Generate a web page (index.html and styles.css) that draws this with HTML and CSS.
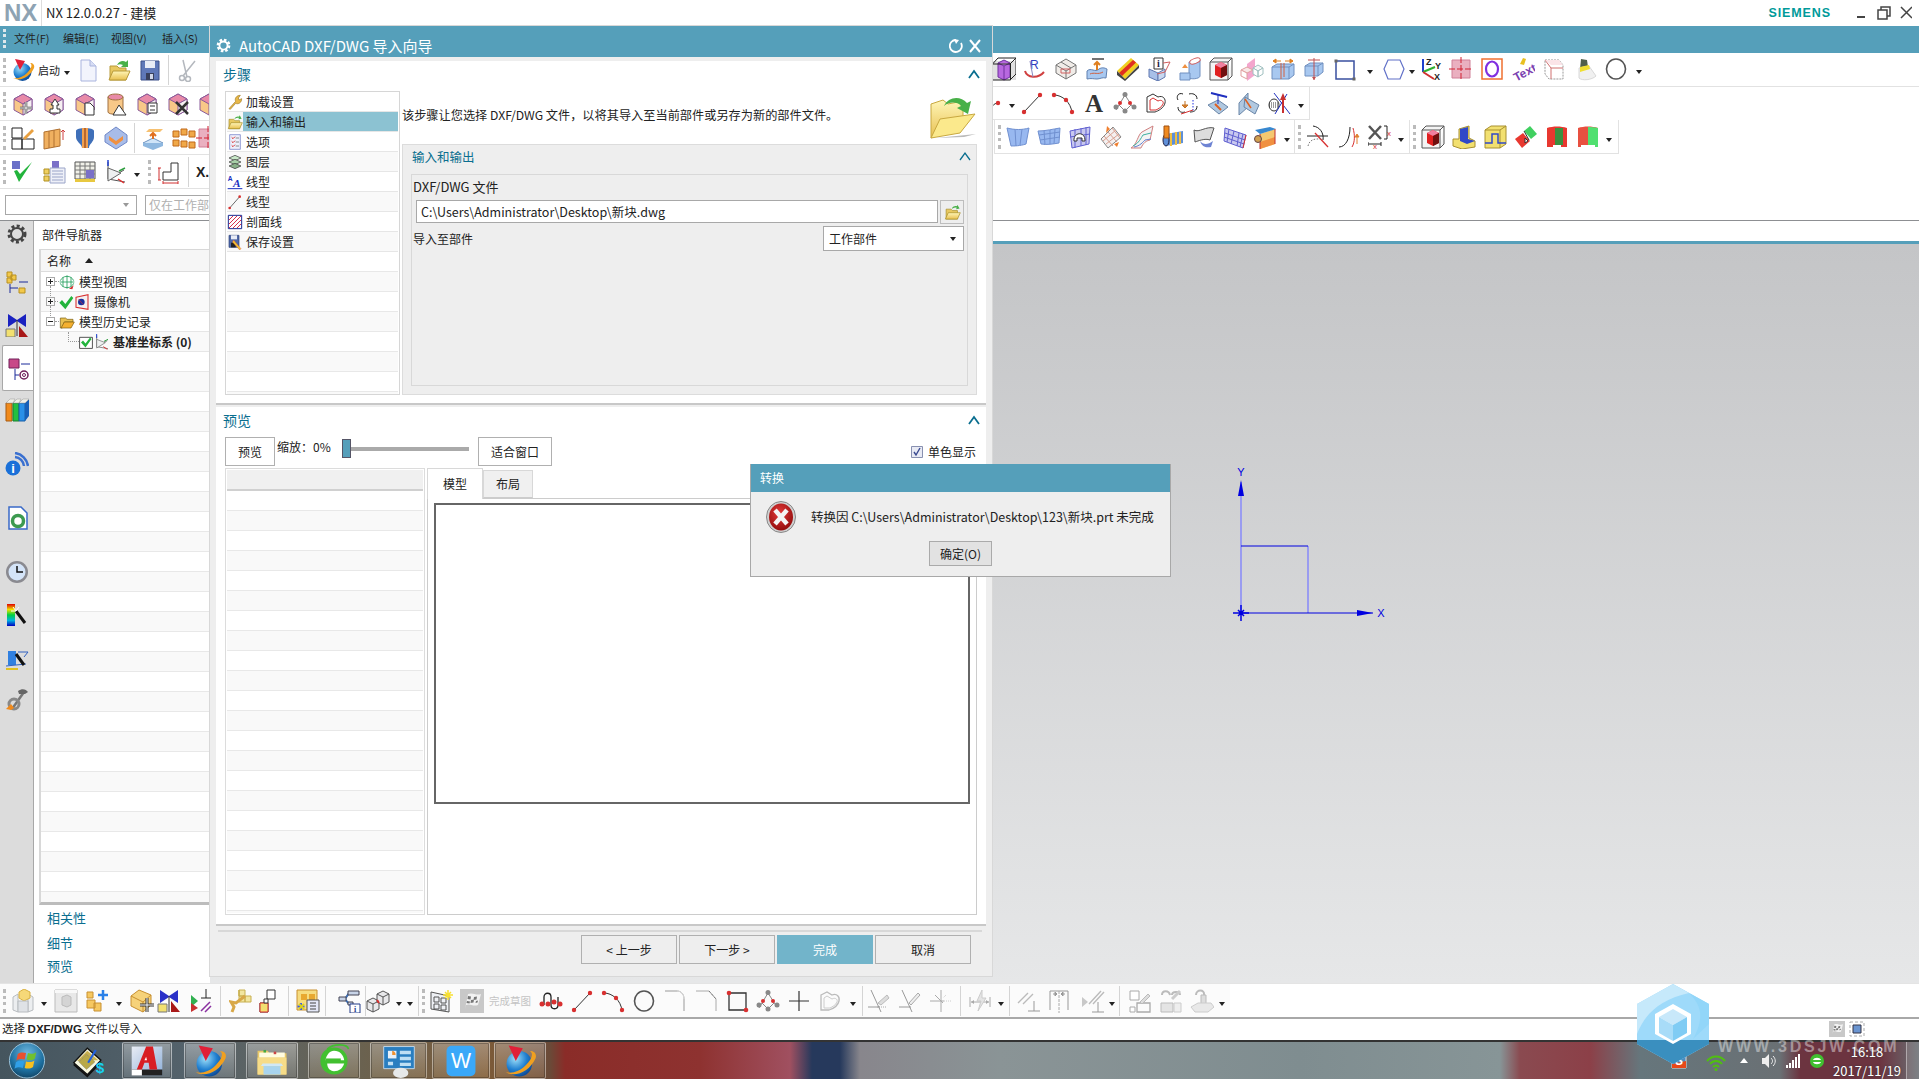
FILE: index.html
```html
<!DOCTYPE html>
<html lang="zh-CN">
<head>
<meta charset="utf-8">
<title>NX 12.0.0.27 - 建模</title>
<link rel="stylesheet" href="styles.css">
</head>
<body>
<svg class="sprite" xmlns="http://www.w3.org/2000/svg">
<defs>
<radialGradient id="gb" cx=".35" cy=".3" r=".8"><stop offset="0" stop-color="#9fe0f8"/><stop offset=".55" stop-color="#1f7fd0"/><stop offset="1" stop-color="#0a3f8a"/></radialGradient>
<radialGradient id="gr" cx=".45" cy=".35" r=".7"><stop offset="0" stop-color="#e43a3a"/><stop offset="1" stop-color="#8e0a0a"/></radialGradient>
<linearGradient id="gf" x1="0" y1="0" x2="0" y2="1"><stop offset="0" stop-color="#fff6b8"/><stop offset="1" stop-color="#e8c050"/></linearGradient>
<linearGradient id="gs" x1="0" y1="0" x2="1" y2="1"><stop offset="0" stop-color="#dbe6f8"/><stop offset="1" stop-color="#7f9fdc"/></linearGradient>
<linearGradient id="gbw" x1="0" y1="0" x2="1" y2="1"><stop offset="0" stop-color="#e8ecf4"/><stop offset="1" stop-color="#8fb0d8"/></linearGradient>
<linearGradient id="grb" x1="0" y1="0" x2="0" y2="1"><stop offset="0" stop-color="#e00000"/><stop offset=".25" stop-color="#f0e000"/><stop offset=".5" stop-color="#00d040"/><stop offset=".75" stop-color="#00b0e0"/><stop offset="1" stop-color="#0000c0"/></linearGradient>
<radialGradient id="go" cx=".5" cy=".3" r=".8"><stop offset="0" stop-color="#6fb8e0"/><stop offset=".6" stop-color="#1d6f9f"/><stop offset="1" stop-color="#0c3550"/></radialGradient>
</defs>
<symbol id="nx" viewBox="0 0 24 24"><circle cx="11.500" cy="14" r="9" fill="url(#gb)"/><path d="M2 20c7 4 17-1 21-10 1-3-1-5-4-5 3 2 1 6-3 10-4 4-9 6-14 5z" fill="#f0a020"/><path d="M4 1l10 2-5 9z" fill="#e02038"/></symbol>
<symbol id="new" viewBox="0 0 24 24"><path d="M5 2h9l6 6v15H5z" fill="#f2f4fc" stroke="#a9b4de"/><path d="M14 2v6h6" fill="#d8def4" stroke="#a9b4de"/></symbol>
<symbol id="open" viewBox="0 0 24 24"><path d="M3 22V8h7l2 2h7v12z" fill="#e8c860" stroke="#b89a3a"/><path d="M2 22l4-9h17l-4 9z" fill="url(#gf)" stroke="#b89a3a"/><path d="M10 7c2-4 6-5 9-3l2-2v7h-7l2-2c-2-1-4-1-6 0z" fill="#48b048"/></symbol>
<symbol id="save" viewBox="0 0 24 24"><path d="M3 3h18v19H3z" fill="#5f78b8" stroke="#3b4f88"/><path d="M7 3h10v7H7z" fill="#e8ecf6"/><path d="M8 15h8v7H8z" fill="#39405c"/><path d="M12 16h3v5h-3z" fill="#cfd6e8"/></symbol>
<symbol id="scis" viewBox="0 0 24 24" ><g fill="none" stroke="#b4b8be" stroke-width="1.500"><circle cx="7" cy="20" r="2.500"/><circle cx="13" cy="21" r="2.500"/><path d="M8 18L20 3M12 19L8 2"/></g></symbol>
<symbol id="cb" viewBox="0 0 24 24"><path d="M3 7l9-5 9 5v11l-9 5-9-5z" fill="#f8c888" stroke="#8a5a9a"/><path d="M3 7l9-5 9 5-9 5z" fill="#e88aa8" stroke="#8a5a9a"/><path d="M12 12l9-5v11l-9 5z" fill="#f6f0f2" stroke="#8a5a9a"/></symbol>
<symbol id="cmove" viewBox="0 0 24 24"><use href="#cb"/><path d="M15 10v12M9 16h12" stroke="#444" stroke-width="2.500"/><path d="M15 10v12M9 16h12" stroke="#fff" stroke-width="1"/></symbol>
<symbol id="cup" viewBox="0 0 24 24"><use href="#cb"/><path d="M13 7l4 6h-2v4h3v4H8v-4h3v-4H9z" fill="#fff" stroke="#333"/></symbol>
<symbol id="cdoc" viewBox="0 0 24 24"><use href="#cb"/><path d="M12 11h5l4 4v8h-9z" fill="#fff" stroke="#333"/></symbol>
<symbol id="ccyl" viewBox="0 0 24 24"><path d="M4 5v15c0 3 15 3 15 0V5z" fill="#f8c888" stroke="#a07040"/><ellipse cx="11.500" cy="5" rx="7.500" ry="3" fill="#e88aa8" stroke="#a07040"/><path d="M15 13l7 10H9z" fill="#fff" stroke="#333"/></symbol>
<symbol id="cdoc2" viewBox="0 0 24 24"><use href="#cb"/><path d="M13 11h9v10h-9zM15 14h5M15 18h5" fill="#fff" stroke="#333"/></symbol>
<symbol id="cx" viewBox="0 0 24 24"><use href="#cb"/><path d="M10 10l12 12M22 10L10 22" stroke="#333" stroke-width="2.500"/></symbol>
<symbol id="sk1" viewBox="0 0 24 24"><g fill="#fff" stroke="#222"><path d="M1 2h10v10H1zM1 13h10v10H1zM11 13h12v10H11z"/></g><path d="M12 12l9-9 2 2-9 9z" fill="#e8a040"/></symbol>
<symbol id="or1" viewBox="0 0 24 24"><path d="M2 6l16-3v17l-16 3z" fill="#f0b060" stroke="#b07030"/><path d="M7 5v17M12 4v17" stroke="#b07030"/><path d="M21 14V4m-2 2l2-2 2 2" stroke="#d04040" fill="none"/></symbol>
<symbol id="bl1" viewBox="0 0 24 24"><path d="M3 5c0-4 18-4 18 0v6c0 5-5 7-5 11h-7c0-4-6-6-6-11z" fill="#3f6fb8"/><path d="M9 2h6v20H9z" fill="#f0a050"/><path d="M12 2v20" stroke="#803010"/></symbol>
<symbol id="hx" viewBox="0 0 24 24"><path d="M12 1l11 8v7l-11 7L1 16V9z" fill="#a8bce8" stroke="#7088c8"/><path d="M5 10l7 5 7-5v4l-7 5-7-5z" fill="#f09040"/></symbol>
<symbol id="plt" viewBox="0 0 24 24"><path d="M2 17l10-5 10 5-10 5z" fill="#cfe4f8" stroke="#6f94c0"/><path d="M2 17v3l10 4 10-4v-3" fill="#8fb8e0"/><path d="M5 6h14l3-3H8z" fill="#f6c070"/><path d="M12 7v6m-3-3l3-3 3 3" fill="none" stroke="#e07020" stroke-width="2"/></symbol>
<symbol id="arr" viewBox="0 0 24 24"><g fill="#f0a848" stroke="#c06818" ><path d="M1 5h6v6H1zM9 3h6v6H9zM17 5h6v6h-6zM1 14h6v6H1zM9 15h6v6H9zM17 16h6v6h-6z"/></g></symbol>
<symbol id="chk" viewBox="0 0 24 24"><path d="M1 1h8v8H1z" fill="#6a70c8"/><path d="M3 11l5 11L21 2l-12 12-3-4z" fill="#22b43c"/></symbol>
<symbol id="tbl1" viewBox="0 0 24 24"><path d="M10 1h7v7h-7z" fill="#7a70c8"/><g fill="#eef0f8" stroke="#9aa4c8"><path d="M8 8h15v15H8z"/></g><path d="M10 11h11M10 14h11M10 17h11M10 20h11" stroke="#9aa4c8"/><path d="M2 9h5v5H2zM2 16h5v5H2z" fill="#f0d060" stroke="#b09020"/></symbol>
<symbol id="tbl2" viewBox="0 0 24 24"><path d="M2 2h20v17H2z" fill="#f0f0e8" stroke="#555"/><path d="M2 6h20M2 10h20M2 14h20M7 2v17M12 2v17M17 2v17" stroke="#777"/><path d="M2 19h20v3H2z" fill="#e8c840"/><path d="M13 10h8v8h-8z" fill="#7a70c8"/></symbol>
<symbol id="cs" viewBox="0 0 24 24"><path d="M4 2v17M4 19l17 3M4 19L20 10" fill="none" stroke="#555"/><path d="M4 8l13 5-13 8z" fill="#eef0f0" stroke="#666"/><path d="M4 0v6" stroke="#2040d0" stroke-width="1.500"/><path d="M15 11l6-3" stroke="#30a040" stroke-width="1.500"/><path d="M14 19l6 4" stroke="#e03030" stroke-width="1.500"/></symbol>
<symbol id="dim" viewBox="0 0 24 24"><path d="M5 20V12h8V3h7v17z" fill="#fff" stroke="#333"/><path d="M1 8v12M0 8h3M0 20h3M5 23h15M5 21v3M20 21v3" stroke="#d03030"/></symbol>
<symbol id="gear" viewBox="0 0 24 24"><circle cx="12" cy="12" r="8" fill="none" stroke="#444" stroke-width="3" stroke-dasharray="3 2.300"/><circle cx="12" cy="12" r="6" fill="none" stroke="#444" stroke-width="2"/></symbol>
<symbol id="gearw" viewBox="0 0 24 24"><circle cx="12" cy="12" r="9" fill="none" stroke="#fff" stroke-width="4" stroke-dasharray="4 3"/><circle cx="12" cy="12" r="6.500" fill="none" stroke="#fff" stroke-width="3"/></symbol>
<symbol id="asm" viewBox="0 0 24 24"><path d="M2 2h5v5H2zM6 5h5v5H6zM2 8h5v5H2z" fill="#f2c84a" stroke="#b89020"/><path d="M14 18h6v5h-6z" fill="#f2c84a" stroke="#b89020"/><path d="M5 14v9M5 18h8M14 12h9" stroke="#1a2a9a"/></symbol>
<symbol id="cons" viewBox="0 0 24 24"><path d="M3 1l9 6 9-6v13l-9-6-9 6z" fill="#1a22c0"/><path d="M1 16h9v8H1z" fill="#f2e070" stroke="#777"/><path d="M14 13l9 11h-9z" fill="#a81818"/><path d="M12 7v16" stroke="#333"/></symbol>
<symbol id="rol" viewBox="0 0 24 24"><path d="M3 2h10v9H3z" fill="#c84888" stroke="#70205a"/><path d="M15 7h9M9 12v11M9 18h4" stroke="#1a2a9a"/><circle cx="18" cy="18" r="4" fill="none" stroke="#70205a" stroke-width="1.500"/><circle cx="18" cy="18" r="1.500" fill="none" stroke="#70205a"/></symbol>
<symbol id="books" viewBox="0 0 24 24"><path d="M1 5h6v18H1z" fill="#f08a1c" stroke="#a85a10"/><path d="M8 5h6v18H8z" fill="#22c040" stroke="#168030"/><path d="M14 5h6v18h-6z" fill="#2a90e8" stroke="#1860a8"/><path d="M20 5l4-4v17l-4 5z" fill="#1860b8"/><path d="M1 5l4-4h5L8 5zM8 5l4-4h4l-2 4zM14 5l4-4h6l-4 4z" fill="#f0f0e8" stroke="#999" stroke-width=".5"/></symbol>
<symbol id="dg" viewBox="0 0 24 24"><path d="M4 1h12l6 6v16H4z" fill="#fff" stroke="#3a6ac8" stroke-width="1.500"/><circle cx="13" cy="15" r="5.500" fill="none" stroke="#3c9a50" stroke-width="3.500"/></symbol>
<symbol id="clk" viewBox="0 0 24 24"><circle cx="12" cy="12" r="11" fill="#8a8a90"/><circle cx="12" cy="12" r="8.500" fill="#d4e4f8"/><path d="M12 6v6h6" fill="none" stroke="#111" stroke-width="1.500"/></symbol>
<symbol id="rb" viewBox="0 0 24 24"><path d="M2 1h8v22H2z" fill="url(#grb)"/><path d="M11 8l9 12" stroke="#111" stroke-width="3"/><path d="M11 8l-3-4m3 4l3-4m-3 4H6" stroke="#fff"/></symbol>
<symbol id="wand" viewBox="0 0 24 24"><path d="M3 5h8v14H3z" fill="#3080e0"/><path d="M1 20l20-2M13 6h10l-4 5" fill="none" stroke="#3060c0"/><path d="M1 23h12" stroke="#e0c020" stroke-width="2"/><path d="M11 8l8 11" stroke="#111" stroke-width="3"/></symbol>
<symbol id="tool" viewBox="0 0 24 24"><path d="M7 22L19 5" stroke="#777" stroke-width="2.500"/><path d="M13 4c4-3 8-2 10 1l-3 2-6 0z" fill="#666"/><circle cx="9" cy="17" r="5" fill="none" stroke="#888" stroke-width="3"/><path d="M1 22l5-5 3 4-3 2z" fill="#f08a1c"/></symbol>
<symbol id="pc" viewBox="0 0 24 24"><path d="M0 4h24v19H0z" fill="#e0e0e0"/><path d="M6 6l6-3 6 3v14l-6 3-6-3z" fill="#b868e0" stroke="#7030a0"/><path d="M6 6l6 3 6-3" fill="#d49af0" stroke="#7030a0"/><path d="M12 9v14" stroke="#7030a0"/><path d="M.5 7h18v16H.5zM.5 7L6 1h18l-6 6M24 1v16l-6 6" fill="none" stroke="#222"/></symbol>
<symbol id="wr" viewBox="0 0 24 24"><g fill="#f0ece8" stroke="#777"><path d="M12 2l10 6v8l-10 6-10-6V8z"/></g><path d="M2 8l10 6 10-6M7 5l10 6M12 14v8" fill="none" stroke="#777"/><path d="M7 12h9v4H7z" fill="none" stroke="#d06060"/></symbol>
<symbol id="lift" viewBox="0 0 24 24"><path d="M2 14c4-4 8 2 12-2 3-2 6-1 8 0l-1 9c-4-1-6 1-9 1s-6-1-10 0z" fill="#a8c8f0" stroke="#6080b0"/><path d="M5 17c4-2 8 1 13-2" stroke="#d06040" fill="none"/><path d="M7 2h12" stroke="#444" stroke-width="1.500"/><path d="M12 13V5m-3 3l3-3 3 3" fill="none" stroke="#e08020" stroke-width="2"/></symbol>
<symbol id="strp" viewBox="0 0 24 24"><path d="M1 14L15 1l8 7L9 22z" fill="#f0d020"/><path d="M3 16L17 3l3 2.500L6 19z" fill="#e03020"/><path d="M1 14v4l8 6 14-13V8L9 22z" fill="#444"/></symbol>
<symbol id="cyl" viewBox="0 0 24 24"><path d="M11 5v15c0 3 11 2 11-1V3z" fill="#a8c8f0" stroke="#7090c0"/><ellipse cx="17" cy="4" rx="5.500" ry="2.500" fill="#fff" stroke="#d06060" transform="rotate(-20 17 4)"/><path d="M2 16h10v7H2z" fill="#a8c8f0" stroke="#7090c0"/><path d="M7 15V8m-3 3l3-4 3 4" fill="#f09040"/></symbol>
<symbol id="rbx" viewBox="0 0 24 24"><path d="M1 5h18v18H1zM1 5l4-4h18l-4 4M23 1v18l-4 4" fill="#f4f4f4" stroke="#555"/><path d="M6 8l6-3 6 3v10l-6 3-6-3z" fill="#e02020"/><path d="M6 8l6 3 6-3-6-3z" fill="#f080a0"/><path d="M12 11l6-3v10l-6 3z" fill="#701010"/></symbol>
<symbol id="pln" viewBox="0 0 24 24"><path d="M7 7l8-6v17l-8 6z" fill="#f090c0" opacity=".8"/><path d="M1 13l6-3 6 3-6 3z" fill="#f8e8e8" stroke="#e0a0a0"/><path d="M1 13v6l6 3v-6z" fill="#fff" stroke="#e0a0a0"/><path d="M13 11l5-3 5 3-5 3z" fill="#f4f8f8" stroke="#a0c0c0"/><path d="M13 11v6l5 3v-6zM18 14l5-3v6l-5 3z" fill="#fff" stroke="#a0c0c0"/></symbol>
<symbol id="spl" viewBox="0 0 24 24"><path d="M1 10l5-3h17v11l-5 4H1z" fill="#a8c8f0" stroke="#7090c0"/><path d="M1 10h17v12M18 10l5-3" fill="none" stroke="#7090c0"/><path d="M10 6v16M13 6v14" stroke="#d06040"/><path d="M2 4h8M14 4h8M2 4l3-2v4zM22 4l-3-2v4z" fill="#e08020" stroke="#e08020"/></symbol>
<symbol id="crs" viewBox="0 0 24 24"><path d="M3 9l5-3h13v9l-5 4H3z" fill="#a8c8f0" stroke="#7090c0"/><path d="M3 9h13v10M16 9l5-3" fill="none" stroke="#7090c0"/><path d="M12 1v22M6 3h12" stroke="#c05050"/><path d="M10 20l2 3 2-3z" fill="#c05050"/></symbol>
<symbol id="rct" viewBox="0 0 24 24"><path d="M3 4h18v18H3z" fill="#fff" stroke="#3a50a0" stroke-width="1.500"/><rect x="1.500" y="2.500" width="3" height="3" fill="#666"/><rect x="19.500" y="20.500" width="3" height="3" fill="#666"/></symbol>
<symbol id="hxo" viewBox="0 0 24 24"><path d="M6 3h12l4 9-4 10H6L2 12z" fill="#fff" stroke="#6070c8" stroke-width="1.200"/></symbol>
<symbol id="ctr" viewBox="0 0 24 24"><path d="M3 3h18v18H3z" fill="#eab0c0" stroke="#d08098"/><path d="M12 0v24M0 12h24" stroke="#d02030" stroke-dasharray="6 2"/></symbol>
<symbol id="oo" viewBox="0 0 24 24"><path d="M2 2h20v20H2z" fill="#fff" stroke="#f07030" stroke-width="1.500"/><ellipse cx="12" cy="12" rx="6" ry="7.500" fill="none" stroke="#8030e0" stroke-width="2.200"/></symbol>
<symbol id="pri" viewBox="0 0 24 24"><path d="M3 3h14l4 5v14H7L3 17z" fill="#fff" stroke="#999" stroke-dasharray="2 1"/><path d="M3 3l6 8h12M9 11v11" fill="none" stroke="#d07070"/><path d="M3 3h14l4 5H9z" fill="#fbe4e8"/></symbol>
<symbol id="lmp" viewBox="0 0 24 24"><path d="M8 2l6 1 1 7-8 2z" fill="#50604a"/><path d="M6 11l10-2 7 10c-4 4-14 5-17 2z" fill="#f0f0f0" stroke="#d8d8d8"/><path d="M7 10l9-2 1 4-10 3z" fill="#f0e030"/></symbol>
<symbol id="cir" viewBox="0 0 24 24"><ellipse cx="12" cy="12" rx="9.500" ry="10" fill="none" stroke="#555" stroke-width="1.600"/></symbol>
<symbol id="ln" viewBox="0 0 24 24"><path d="M4 21L20 4" stroke="#333"/><circle cx="4" cy="21" r="2.200" fill="#d83030"/><circle cx="20" cy="4" r="2.200" fill="#d83030"/></symbol>
<symbol id="ac" viewBox="0 0 24 24"><path d="M3 4c8 0 17 7 18 18" fill="none" stroke="#333"/><circle cx="3" cy="4" r="2.200" fill="#d83030"/><circle cx="15" cy="9" r="2.200" fill="#d83030"/><circle cx="21" cy="21" r="2.200" fill="#d83030"/></symbol>
<symbol id="stu" viewBox="0 0 24 24"><path d="M3 19L12 4l9 14M6 14l6 6 6-6" fill="none" stroke="#888"/><circle cx="12" cy="3.500" r="2.500" fill="#888"/><circle cx="3" cy="16" r="2.500" fill="#888"/><circle cx="21" cy="16" r="2.500" fill="#888"/><circle cx="12" cy="20" r="2.500" fill="#888"/><circle cx="7" cy="12" r="2" fill="#d83030"/><circle cx="17" cy="12" r="2" fill="#d83030"/></symbol>
<symbol id="hrt" viewBox="0 0 24 24"><path d="M3 6l6-3 5 3c5-2 8 2 7 6-1 5-7 8-10 9H3z" fill="#fff" stroke="#333"/><path d="M6 9l3-2 5 3c4-2 6 1 5 3-1 3-5 5-7 6H6z" fill="none" stroke="#d83030"/></symbol>
<symbol id="ofs" viewBox="0 0 24 24"><path d="M8 3C3 1 1 6 3 9M3 16c0 5 4 6 7 5M14 3c3-1 8 0 8 5M15 21c3 0 7-1 7-6" fill="none" stroke="#222"/><path d="M10 10v6m-3-2l3 3 3-3z" fill="#f09040" stroke="#c07020"/><path d="M18 9v12" stroke="#2030e0" stroke-dasharray="1.500 1.500"/><path d="M6 23l12-4" stroke="#d83030"/></symbol>
<symbol id="prj" viewBox="0 0 24 24"><path d="M5 2l16 4M2 14l10-5 10 7-9 7z" fill="#b0c8e0" stroke="#6a86a8"/><path d="M12 3v10" stroke="#2030c0"/><path d="M9 13l6 6" stroke="#e06020" stroke-width="2"/><path d="M5 2l16 4" stroke="#2030c0" stroke-width="2"/></symbol>
<symbol id="int" viewBox="0 0 24 24"><path d="M2 12l9-10v14l-9 8z" fill="#b0c8e0" stroke="#6a86a8"/><path d="M8 6l14 8-4 9-11-7z" fill="#b0c8e0" stroke="#6a86a8"/><path d="M8 8l6 9" stroke="#e06020" stroke-width="1.500"/></symbol>
<symbol id="mir" viewBox="0 0 24 24"><ellipse cx="6" cy="14" rx="5" ry="6" fill="#fff" stroke="#333"/><path d="M1 14h10M1 12h10M1 16h10" stroke="#333" stroke-dasharray="1 1"/><path d="M6 2l16 21M19 3L7 23" stroke="#2030c0"/><path d="M15 2l-3 7h2v13h2V9h2z" fill="#c83030"/></symbol>
<symbol id="s1" viewBox="0 0 24 24"><path d="M1 3c8 2 15 2 22 0l-3 16c-6 2-12 2-15 2z" fill="#98b8f0" stroke="#7090d0"/><path d="M9 4l1 17M16 4l-2 16" stroke="#7090d0"/></symbol>
<symbol id="s2" viewBox="0 0 24 24"><path d="M1 6c8 0 15-2 22-3l-1 15c-6 1-12 2-18 1z" fill="#98b8f0" stroke="#7090d0"/><path d="M7 5l1 15M13 5v14M18 4l-1 15M2 10l21-3M3 15l20-3" stroke="#7090d0"/></symbol>
<symbol id="s3" viewBox="0 0 24 24"><path d="M2 6l20-4-1 17-17 4z" fill="#c8c8f0" stroke="#6060d0"/><path d="M7 4v19M13 3v18M18 2v18M2 12l20-3" stroke="#6060d0"/><path d="M6 16c-1-9 11-10 11-1v1h-3v-3H9v3z" fill="#fff" stroke="#333"/></symbol>
<symbol id="s4" viewBox="0 0 24 24"><path d="M2 14L14 2l8 10-13 11z" fill="#f4f0f0" stroke="#888"/><path d="M5 11l9 10M9 7l9 10M13 3l8 10M4 16L17 5M7 19L20 9" stroke="#d8a090"/><path d="M8 1l3 3-4 4zM18 22l-3-3 5-2z" fill="#f08030"/></symbol>
<symbol id="s5" viewBox="0 0 24 24"><path d="M1 23C7 20 8 9 12 7l11-6-3 14c-6 1-8 6-9 8z" fill="#f4f4f4" stroke="#d08080"/><path d="M3 21c6-3 8-8 10-11l8-2" fill="none" stroke="#40b0a0"/><path d="M4 22c6-1 9-5 11-7l6-1" fill="none" stroke="#6080d0"/></symbol>
<symbol id="s6" viewBox="0 0 24 24"><path d="M5 9l17-3v12L5 21z" fill="#5f8fd8"/><path d="M10 8v13M15 7v13M19 7v12" stroke="#f0c040" stroke-width="2"/><ellipse cx="5" cy="15" rx="3" ry="6" fill="#5f8fd8" stroke="#224"/><path d="M3 1h5v12H3z" fill="#f08a20" stroke="#a05010"/></symbol>
<symbol id="s7" viewBox="0 0 24 24"><path d="M2 5c5 3 12-4 20-2l-4 12c-5-2-12 1-15 2z" fill="#ddd" stroke="#555"/><path d="M8 16c3 4 8 4 13 0l-2 6c-5 1-9 0-11-6z" fill="#3050c0" opacity=".7"/></symbol>
<symbol id="s8" viewBox="0 0 24 24"><path d="M2 3l21 7-3 13L1 16z" fill="#c8c8f0" stroke="#6060d0"/><path d="M6 4l-2 13M11 6l-3 13M16 8l-2 13M20 9l-3 13M2 8l20 7M1 12l20 7" stroke="#6060d0"/><path d="M23 10l-3 13" stroke="#d83030"/></symbol>
<symbol id="s9" viewBox="0 0 24 24"><path d="M6 9l15-5v15l-15 5z" fill="#f4c870"/><path d="M6 17l15-5v7l-15 5z" fill="#f09040"/><path d="M1 5l15-3 6 2-16 5z" fill="#3888d0"/><path d="M6 9v15M21 4v15" stroke="#c03030"/><circle cx="4" cy="14" r="3.500" fill="#d0a050" stroke="#644"/></symbol>
<symbol id="trm" viewBox="0 0 24 24"><path d="M1 11h21" stroke="#222"/><path d="M7 1c7 1 11 7 10 14" fill="none" stroke="#222"/><path d="M9 8l13 14" stroke="#d83030" stroke-width="1.300"/><path d="M2 21c2-8 9-7 13-7" fill="none" stroke="#777" stroke-dasharray="1.500 1.500"/></symbol>
<symbol id="crv" viewBox="0 0 24 24"><path d="M2 22c7 0 11-9 11-20" fill="none" stroke="#222"/><path d="M15 22c3-5 3-12 1-19" fill="none" stroke="#d83030"/><path d="M20 19v-9m-2 2l2-3 2 3z" fill="#e08030" stroke="#e08030"/></symbol>
<symbol id="yl1" viewBox="0 0 24 24"><path d="M1 14h6V4l10-3v12l6 3v6l-13 2-9-3z" fill="#f2e070" stroke="#a89030"/><path d="M8 4l8-2v12l7 2-8 3-7-3z" fill="#3048c8"/></symbol>
<symbol id="yl2" viewBox="0 0 24 24"><path d="M2 5l6-4h15v18l-6 4H2z" fill="#f2e070" stroke="#a89030"/><path d="M2 5h15v18M17 5l6-4" fill="none" stroke="#a89030"/><path d="M2 18h7V9h6v9h8" fill="none" stroke="#3048c8" stroke-width="1.500"/></symbol>
<symbol id="rg" viewBox="0 0 24 24"><path d="M1 14l8-6 7 8-8 7z" fill="#e83830"/><path d="M10 6l6-5 7 8-6 5z" fill="#40d060"/><path d="M10 6l5 9" stroke="#333"/><path d="M11 13l3 3-3 2z" fill="#fff" stroke="#333"/></symbol>
<symbol id="bk1" viewBox="0 0 24 24"><path d="M2 3c6-2 14-2 20 0v19h-6v-2H8v2H2z" fill="#e83830"/><path d="M10 3h8v17h-8z" fill="#3a9040"/></symbol>
<symbol id="bk2" viewBox="0 0 24 24"><path d="M2 3c6-2 14-2 20 0v19h-3v-2H5v2H2z" fill="#e85040"/><path d="M12 2c3 0 7 0 10 1v19h-3v-2h-7z" fill="#50e070"/></symbol>
<symbol id="dot" viewBox="0 0 12 24"><path d="M0 16c1-2 2-3 5-4" stroke="#333" fill="none"/><circle cx="6" cy="12" r="2.200" fill="#d83030"/></symbol>
<symbol id="b1" viewBox="0 0 24 24"><g fill="#eceef0" stroke="#b8bcc0"><path d="M2 8l5-3v18l-5-2zM17 5l5 3v13l-5 2z"/></g><path d="M8 3l5-3 6 3v6l-6 3-5-3z" fill="#f6d878" stroke="#d8b040"/><path d="M7 12h10v11H7z" fill="#dfe2e6" stroke="#b8bcc0"/></symbol>
<symbol id="b2" viewBox="0 0 24 24"><path d="M1 1h22v22H1z" fill="#e8e8e8" stroke="#bbb"/><path d="M1 1h22v3H1z" fill="#f8f8f8"/><path d="M8 8l5-2 4 2v8l-4 2-5-2z" fill="#d4d4d4" stroke="#bbb"/></symbol>
<symbol id="b3" viewBox="0 0 24 24"><g fill="#f6c860" stroke="#c89030"><path d="M2 3h6v6H2zM2 11h8v8H2zM9 14h7v8H9z"/></g><path d="M18 1v10M13 6h10" stroke="#2a80e8" stroke-width="2.500"/></symbol>
<symbol id="b4" viewBox="0 0 24 24"><path d="M1 7l8-6 12 5v10l-8 7-12-6z" fill="#f6d27a" stroke="#c89030"/><path d="M1 7l12 6 8-7" fill="none" stroke="#c89030"/><path d="M13 13v10" stroke="#c89030"/><path d="M17 9v14M10 16h14" stroke="#333" stroke-width="3"/><path d="M17 9v14M10 16h14" stroke="#fff"/></symbol>
<symbol id="b5" viewBox="0 0 24 24"><path d="M3 1l9 6 9-6v13l-9-6-9 6z" fill="#2a30c8"/><path d="M1 15h9v8H1z" fill="#f2e070" stroke="#777"/><path d="M14 12l9 11h-9z" fill="#a81818"/><path d="M12 7v16" stroke="#333"/></symbol>
<symbol id="b6" viewBox="0 0 24 24"><path d="M3 6l7 6-7 6z" fill="#30b050"/><path d="M3 14l7 5-7 4z" fill="#c83030"/><path d="M18 0v9M13 9h10" stroke="#222"/><path d="M13 22l9-9M17 23l6-6" stroke="#8a30a0" stroke-width="1.500"/></symbol>
<symbol id="b7" viewBox="0 0 24 24"><path d="M10 1h6v6h6v6h-6v-6h-6zM10 1v6h6v6h-6z" fill="#f2e6a0" stroke="#c8b050"/><path d="M3 23l2-5-3-5 5 1 9-7" fill="none" stroke="#d8a848" stroke-width="3"/></symbol>
<symbol id="b8" viewBox="0 0 24 24"><path d="M10 1h8v9h-8zM3 14h8v9H3z" fill="#fff" stroke="#333"/><path d="M3 14h8v9H3z" fill="#f2e070" stroke="#d83030"/><path d="M10 10h-3v4h4v-4h-1" fill="#fff" stroke="#333"/></symbol>
<symbol id="b9" viewBox="0 0 24 24"><path d="M1 1h20v20H1z" fill="#f6dc80" stroke="#c89030"/><path d="M5 5h6v6H5zM13 5h6v6h-6z" fill="#e8a830"/><path d="M11 11h12v12H11z" fill="#e4e8f8" stroke="#555"/><path d="M14 14h6M14 17h6M14 20h6" stroke="#444"/><path d="M5 14v7M1.500 17.500h7" stroke="#4060e0" stroke-width="2"/><path d="M3 15l5 5M8 15l-5 5" stroke="#d8d020" stroke-width="2"/></symbol>
<symbol id="b11" viewBox="0 0 24 24"><g fill="#e8e8ea" stroke="#555"><path d="M1 12l6-3 6 3v8l-6 3-6-3z"/><path d="M11 5l6-3 6 3v8l-6 3-6-3z"/></g><path d="M1 12l6 3 6-3M7 15v8M11 5l6 3 6-3M17 8v8" fill="none" stroke="#555"/><path d="M11 11l2 3" stroke="#d83030" stroke-width="2"/></symbol>
<symbol id="sk2" viewBox="0 0 24 24"><path d="M2 3l18 4v16L2 20z" fill="#eef0f4" stroke="#555"/><path d="M5 8h5v5H5zM12 9h5v5h-5zM5 15h5v5H5zM12 16h5v5h-5z" fill="none" stroke="#555"/><path d="M19 1v10M14 6h10M16 3l6 6M22 3l-6 6" stroke="#f8e030" stroke-width="1.500"/></symbol>
<symbol id="flg" viewBox="0 0 24 24"><path d="M0 0h24v24H0z" fill="#c8c8c8"/><path d="M5 20L8 5c5-2 8 2 13 0l-3 11c-5 2-8-2-12 0z" fill="#f2f2f2"/><path d="M8 7l3 .5-.5 3-3-.5zM14 8l3-.5-.5 3-3 .5zM11 11l3-.5-.5 3-3 .5zM7 12l3 .5-.5 2-3-.5zM16 12l2-.5-.5 2-2 .5z" fill="#777"/></symbol>
<symbol id="wv" viewBox="0 0 24 24"><path d="M4 14V6c0-5 7-5 7 0v8c0 5 7 5 7 0V6" fill="none" stroke="#222" stroke-width="1.300" transform="translate(1 2)"/><circle cx="3" cy="15" r="2.500" fill="#d83030"/><circle cx="9" cy="15" r="2.500" fill="#d83030"/><circle cx="15" cy="13" r="2.500" fill="#d83030"/><circle cx="21" cy="15" r="2.500" fill="#d83030"/></symbol>
<symbol id="fl1" viewBox="0 0 24 24"><path d="M2 2h12c4 0 7 3 7 8v12" fill="none" stroke="#999"/><path d="M14 2c4 0 7 3 7 8" fill="none" stroke="#ddd"/></symbol>
<symbol id="fl2" viewBox="0 0 24 24"><path d="M2 2h13l7 8v12" fill="none" stroke="#aaa"/><path d="M15 2l7 8" stroke="#666" stroke-dasharray="1 1"/></symbol>
<symbol id="rc2" viewBox="0 0 24 24"><path d="M4 4h17v17H4z" fill="none" stroke="#333" stroke-width="1.300"/><circle cx="4" cy="4" r="2.300" fill="#d83030"/><circle cx="21" cy="21" r="2.300" fill="#d83030"/></symbol>
<symbol id="pls" viewBox="0 0 24 24"><path d="M12 2v20M2 12h20" stroke="#333" stroke-width="1.200"/></symbol>
<symbol id="hg" viewBox="0 0 24 24"><path d="M3 6l6-3 5 3c5-2 8 2 7 6-1 5-7 8-10 9H3z" fill="none" stroke="#bbb" stroke-width="1.300"/><path d="M6 9l3-2 5 3c4-2 6 1 5 3-1 3-5 5-7 6H6z" fill="none" stroke="#ccc"/></symbol>
<symbol id="t1" viewBox="0 0 24 24"><path d="M4 1l10 22M1 18h12" stroke="#999"/><path d="M11 14l9-8 2 3-8 7z" fill="#ddd" stroke="#bbb"/><path d="M10 18h10" stroke="#aaa" stroke-dasharray="1 1"/></symbol>
<symbol id="t2" viewBox="0 0 24 24"><path d="M4 1l10 22M1 18h12" stroke="#999"/><path d="M11 14l9-10 2 2-9 10z" fill="#eee" stroke="#aaa"/></symbol>
<symbol id="t3" viewBox="0 0 24 24"><path d="M12 1v22M1 12h14M6 6l8 8" stroke="#aaa"/><path d="M15 12h8M17 6l-3 3" stroke="#ccc" stroke-dasharray="1 1"/></symbol>
<symbol id="t4" viewBox="0 0 24 24"><path d="M2 8v10M22 8v10M3 13h18" stroke="#aaa"/><path d="M3 13l3-2v4zM21 13l-3-2v4z" fill="#aaa"/><path d="M14 1l-5 11h4l-3 10 8-13h-4z" fill="#e4e4e4" stroke="#ccc"/></symbol>
<symbol id="t5" viewBox="0 0 24 24"><path d="M2 14L12 4M7 15L17 5" stroke="#bbb" stroke-width="1.400"/><path d="M18 12v10M12 22h12" stroke="#999"/></symbol>
<symbol id="t6" viewBox="0 0 24 24"><path d="M3 2h18v19M3 2v19" fill="none" stroke="#999"/><path d="M12 2v22" stroke="#aaa" stroke-dasharray="3 1"/><path d="M6 5h4M14 5h4M10 5L8 3v4zM14 5l2-2v4z" fill="#999" stroke="#999"/></symbol>
<symbol id="t7" viewBox="0 0 24 24"><path d="M1 8l6 5-6 5z" fill="#c8c8c8"/><path d="M8 15L20 2M12 15L23 3" stroke="#bbb" stroke-width="1.400"/><path d="M17 13v10M11 23h12" stroke="#999"/></symbol>
<symbol id="t8" viewBox="0 0 24 24"><path d="M2 2h9v9H2zM2 18h5v5H2z" fill="#fff" stroke="#aaa"/><path d="M9 14h13v9H9z" fill="none" stroke="#aaa" stroke-width="1.300"/><path d="M12 13l8-8 2 2-8 8z" fill="#ddd" stroke="#bbb"/></symbol>
<symbol id="t9" viewBox="0 0 24 24"><path d="M3 6c0-5 7-5 8 0M13 6c0-4 8-4 8 0" fill="none" stroke="#bbb" stroke-width="2"/><path d="M2 14h12v9H2z" fill="#e4e4e4" stroke="#bbb"/><path d="M15 14h7v9h-7z" fill="#eee" stroke="#ccc"/><path d="M13 10l8-8" stroke="#ccc" stroke-width="3"/></symbol>
<symbol id="t10" viewBox="0 0 24 24"><path d="M6 6c0-6 9-6 8 0" fill="none" stroke="#bbb" stroke-width="2"/><path d="M11 6h5v10h-5z" fill="#ddd" stroke="#bbb"/><path d="M1 18l7-4h13l3 4-6 5H5z" fill="#e8e8e8" stroke="#ccc"/></symbol>
<symbol id="key" viewBox="0 0 24 24"><path d="M3 22l10-11c-2-4 1-9 7-9l-3 4 1 3 4-2c0 6-5 9-9 7L5 23z" fill="#e8b848" stroke="#a07820"/></symbol>
<symbol id="fld" viewBox="0 0 24 24"><path d="M3 22V8h7l2 2h7v12z" fill="#e8c860" stroke="#a8902a"/><path d="M2 22l4-9h17l-4 9z" fill="url(#gf)" stroke="#a8902a"/><path d="M11 7c2-3 5-4 7-3l1-2 3 5-5 1 1-2c-2-.5-4 0-6 1z" fill="#48b048"/></symbol>
<symbol id="opt" viewBox="0 0 24 24"><path d="M4 1h16v22H4z" fill="#eef0fc" stroke="#6070c0"/><path d="M7 5l2 2 3-3M7 11l2 2 3-3M7 17l2 2 3-3" fill="none" stroke="#d83030" stroke-width="1.500"/><path d="M13 6h5M13 12h5M13 18h5" stroke="#555"/></symbol>
<symbol id="lay" viewBox="0 0 24 24"><g fill="#c8e8c8" stroke="#333"><path d="M12 2l9 4-9 4-9-4z"/><path d="M12 8l9 4-9 4-9-4z" fill="#a8d0a8"/><path d="M12 14l9 4-9 4-9-4z" fill="#88b088"/></g></symbol>
<symbol id="sln" viewBox="0 0 24 24"><path d="M4 21L19 4" stroke="#222"/><circle cx="4" cy="21" r="2" fill="#d83030"/><circle cx="19" cy="4" r="2" fill="#d83030"/></symbol>
<symbol id="hat" viewBox="0 0 24 24"><path d="M2 2h20v20H2z" fill="#fff" stroke="#1a2a90" stroke-width="1.500"/><path d="M3 9l6-6M3 15L15 3M3 21L21 3M9 21L21 9M15 21l6-6" stroke="#d83050" stroke-width="1.500"/></symbol>
<symbol id="sv2" viewBox="0 0 24 24"><path d="M3 2h15v18H3z" fill="#4f68a8" stroke="#2c3f78"/><path d="M6 2h9v6H6z" fill="#e8ecf6"/><path d="M6 13h7v7H6z" fill="#222"/><path d="M10 9l11 13-2 2L8 12z" fill="#f0c030" stroke="#d83030" stroke-width=".5"/></symbol>
<symbol id="fgl" viewBox="0 0 24 24"><path d="M2 10a11 11 0 0 1 20 0M2 14a11 11 0 0 0 20 0M12 2v20M6 5v14M18 5v14M1 12h22" fill="none" stroke="#28a060" stroke-width="1.300"/><path d="M15 22l7-5-2 6z" fill="#d83030"/></symbol>
<symbol id="cam" viewBox="0 0 24 24"><path d="M3 5l18-4v22l-18-3z" fill="#f4f0f0" stroke="#d83030" stroke-width="1.600"/><circle cx="11" cy="12" r="5" fill="#1a30a0"/><path d="M7 8l7 8" stroke="#d83030"/></symbol>
<symbol id="okc" viewBox="0 0 24 24"><path d="M2 13l4-4 5 6L20 3l3 3L11 23z" fill="#22b43c"/></symbol>
<symbol id="fldo" viewBox="0 0 24 24"><path d="M2 21V6h8l2 2h9v4H8L5 21z" fill="#e8c050" stroke="#775a10"/><path d="M3 21l5-9h15l-5 9z" fill="#f4b030" stroke="#775a10"/></symbol>
<symbol id="erx" viewBox="0 0 24 24"><path d="M1 4h22v19H1z" fill="#fff" stroke="#222" stroke-width="1.300" /></symbol>
<symbol id="cad" viewBox="0 0 40 40"><path d="M2 3h36v34H2z" fill="url(#gbw)"/><path d="M2 30h36v7H2z" fill="#222"/><path d="M2 30h12v7H2z" fill="#fff"/><path d="M8 30L19 3h8l5 27h-9l-1-8h-5l-3 8z" fill="#d81e24"/><path d="M19 15l-2 4h3z" fill="#fff"/></symbol>
<symbol id="expl" viewBox="0 0 40 40"><path d="M3 8h12l2 3h20v25H3z" fill="#e8c868"/><path d="M5 10h30v6H5z" fill="#fffce0"/><path d="M3 16h34v20H3z" fill="#f6dc88"/><path d="M10 26h20v10H10z" fill="#a8d4ee"/><path d="M7 26l2-3h22l2 3z" fill="#d0e8f6"/><path d="M10 7h3v3h-3z" fill="#4a4"/><path d="M22 9h3v3h-3z" fill="#c44"/></symbol>
<symbol id="eb" viewBox="0 0 40 40"><path d="M20 4c10 0 16 7 16 16s-7 16-16 16S4 29 4 20 10 4 20 4z" fill="#42c030"/><path d="M20 8c7 0 11 5 12 11H10c1-6 5-11 10-11z" fill="#fff"/><path d="M12 23h20c-2 6-6 9-12 9-5 0-8-4-8-9z" fill="#fff"/><path d="M10 17h18v3H10z" fill="#42c030"/><path d="M12 6C20-1 36 0 37 6" fill="none" stroke="#42c030" stroke-width="2"/></symbol>
<symbol id="pan" viewBox="0 0 40 40"><path d="M2 3h36v26H2z" fill="#2a7ec0" stroke="#d0e0f0"/><path d="M7 8h10v9H7z" fill="#e8f0f8"/><path d="M12 8v5h4a5 5 0 0 0-4-5z" fill="#f09030"/><path d="M21 8h13v4H21zM21 15h13v4H21zM7 21h6v4H7zM21 22h13v4H21z" fill="#bfdff4"/><ellipse cx="22" cy="34" rx="9" ry="6" fill="#e6e8e8"/></symbol>
</svg>

<div class="app">
  <header class="title">
    <span class="nx">NX</span>
    <span class="title-text">NX 12.0.0.27 - 建模</span>
    <span class="siemens">SIEMENS</span>
    <svg class="winbtns" viewBox="0 0 60 14"><path d="M5 11h8" stroke="#444" stroke-width="2"/><path d="M26 4h9v9h-9zM29 4V1h9v9h-3" fill="none" stroke="#444" stroke-width="1.500"/><path d="M49 1l11 11M60 1L49 12" stroke="#444" stroke-width="1.500"/></svg>
  </header>

  <nav class="menu">
    <b class="mgrip"></b>
    <span class="m1">文件(F)</span><span class="m2">编辑(E)</span><span class="m3">视图(V)</span><span class="m4">插入(S)</span>
  </nav>

  <section class="ribbon">
    <div class="rib-left">
      <div class="tb"><b class="grip"></b><svg class="i"><use href="#nx"/></svg><span class="qs">启动</span><b class="car w10"></b><svg class="i"><use href="#new"/></svg><svg class="i"><use href="#open"/></svg><svg class="i"><use href="#save"/></svg><b class="div w6"></b><svg class="i"><use href="#scis"/></svg></div>
      <div class="tb"><b class="grip"></b><svg class="i"><use href="#cmove"/></svg><svg class="i"><use href="#cup"/></svg><svg class="i"><use href="#cdoc"/></svg><svg class="i"><use href="#ccyl"/></svg><svg class="i"><use href="#cdoc2"/></svg><svg class="i"><use href="#cx"/></svg><svg class="i"><use href="#cb"/></svg></div>
      <div class="tb"><b class="grip"></b><svg class="i"><use href="#sk1"/></svg><svg class="i"><use href="#or1"/></svg><svg class="i"><use href="#bl1"/></svg><svg class="i"><use href="#hx"/></svg><b class="div w6"></b><svg class="i"><use href="#plt"/></svg><svg class="i"><use href="#arr"/></svg><svg class="i tighter"><use href="#ctr"/></svg></div>
      <div class="tb"><b class="grip"></b><svg class="i"><use href="#chk"/></svg><svg class="i"><use href="#tbl1"/></svg><svg class="i"><use href="#tbl2"/></svg><svg class="i"><use href="#cs"/></svg><b class="car w12"></b><b class="grip grip2"></b><svg class="i"><use href="#dim"/></svg><b class="div w6"></b><span class="xtxt">X.</span></div>
      <div class="search"><span class="sel"><b class="car w10 gray"></b></span><span class="filt">仅在工作部件</span></div>
    </div>
    <div class="rib-right">
      <div class="tb"><svg class="i first"><use href="#pc"/></svg><svg class="i" viewBox="0 0 24 24"><text x="7" y="12" font-size="12" fill="#3040c0" font-family="Liberation Sans">R</text><path d="M2 14c2 7 13 8 19 1" fill="none" stroke="#d04040" stroke-width="2"/><path d="M7 4l3 16" stroke="#8888c0"/></svg><svg class="i"><use href="#wr"/></svg><svg class="i"><use href="#lift"/></svg><svg class="i"><use href="#strp"/></svg><svg class="i" viewBox="0 0 24 24"><path d="M2 12l9 4v8l-9-4z" fill="#a8c0e8" stroke="#6078b0"/><path d="M11 16l7-4v8l-7 4z" fill="#c8d8f0" stroke="#6078b0"/><path d="M7 1h9v11H7z" fill="#fff" stroke="#333"/><text x="11.500" y="10" font-size="10" font-weight="700" text-anchor="middle" fill="#224" font-family="Liberation Serif">i</text><path d="M16 6l7-1-5 10-8 2" fill="none" stroke="#d06060"/></svg><svg class="i"><use href="#cyl"/></svg><svg class="i"><use href="#rbx"/></svg><svg class="i"><use href="#pln"/></svg><svg class="i"><use href="#spl"/></svg><svg class="i"><use href="#crs"/></svg><svg class="i"><use href="#rct"/></svg><b class="car w18"></b><svg class="i"><use href="#hxo"/></svg><b class="car w5"></b><svg class="i" viewBox="0 0 24 24"><path d="M5 15V2" fill="none" stroke-width="2" stroke="#2040d0"/><path d="M5 15l12-5" stroke="#30b030" stroke-width="2"/><path d="M5 15l11 7" stroke="#d03030" stroke-width="2"/><g font-size="9" font-weight="700" fill="#222" font-family="Liberation Sans"><text x="8" y="8">Z</text><text x="17" y="12">Y</text><text x="16" y="23">X</text></g></svg><svg class="i"><use href="#ctr"/></svg><svg class="i"><use href="#oo"/></svg><svg class="i" viewBox="0 0 24 24"><text x="0" y="20" font-size="12" font-weight="700" font-family="Liberation Sans" fill="#7a40b0" transform="rotate(-28 12 12)">Text</text><path d="M9 7l3-6 3 1-2 6z" fill="#e8c020"/></svg><svg class="i"><use href="#pri"/></svg><svg class="i"><use href="#lmp"/></svg><svg class="i"><use href="#cir"/></svg><b class="car w14"></b></div>
      <div class="tb group g318"><svg class="dotic"><use href="#dot"/></svg><b class="car w16"></b><svg class="i first"><use href="#ln"/></svg><svg class="i"><use href="#ac"/></svg><svg class="i" viewBox="0 0 24 24"><text x="12" y="21" font-size="25" text-anchor="middle" font-family="Liberation Serif" fill="#333" font-weight="700">A</text></svg><svg class="i"><use href="#stu"/></svg><svg class="i"><use href="#hrt"/></svg><svg class="i"><use href="#ofs"/></svg><svg class="i"><use href="#prj"/></svg><svg class="i"><use href="#int"/></svg><svg class="i"><use href="#mir"/></svg><b class="car w11"></b></div>
      <div class="tb tb3">
        <div class="group g301"><b class="grip grip3"></b><svg class="i"><use href="#s1"/></svg><svg class="i"><use href="#s2"/></svg><svg class="i"><use href="#s3"/></svg><svg class="i"><use href="#s4"/></svg><svg class="i"><use href="#s5"/></svg><svg class="i"><use href="#s6"/></svg><svg class="i"><use href="#s7"/></svg><svg class="i"><use href="#s8"/></svg><svg class="i"><use href="#s9"/></svg><b class="car w10"></b></div>
        <div class="group g115"><b class="grip grip3"></b><svg class="i"><use href="#trm"/></svg><svg class="i"><use href="#crv"/></svg><svg class="i" viewBox="0 0 24 24"><path d="M1 1l12 13M13 1L1 14" stroke="#555" stroke-width="2.500"/><path d="M16 1h3v13h-3M0 17v4M0 19h13M13 17v4" fill="none" stroke="#222"/><text x="19" y="11" font-size="8" fill="#d83030" font-family="Liberation Sans">x</text><text x="5" y="24" font-size="8" fill="#d83030" font-family="Liberation Sans">x</text></svg><b class="car w10"></b></div>
        <div class="group g209"><b class="grip grip3"></b><svg class="i"><use href="#rbx"/></svg><svg class="i"><use href="#yl1"/></svg><svg class="i"><use href="#yl2"/></svg><svg class="i"><use href="#rg"/></svg><svg class="i"><use href="#bk1"/></svg><svg class="i"><use href="#bk2"/></svg><b class="car w10"></b></div>
      </div>
    </div>
  </section>

  <main class="main">
    <aside class="side">
      <div class="vtabs">
        <svg class="vi m1t"><use href="#gear"/></svg>
        <svg class="vi m24t"><use href="#asm"/></svg>
        <svg class="vi m19t"><use href="#cons"/></svg>
        <div class="vactive"><svg class="vi0"><use href="#rol"/></svg></div>
        <svg class="vi m7t"><use href="#books"/></svg>
        <svg class="vi m30t" viewBox="0 0 24 24"><circle cx="8" cy="16" r="7.500" fill="#1a70d8"/><text x="8" y="21" font-size="13" font-weight="700" fill="#fff" text-anchor="middle" font-family="Liberation Sans">i</text><path d="M10 5a10 10 0 0 1 9 9M10 1a15 15 0 0 1 13 13" fill="none" stroke="#3a70d0" stroke-width="2.500"/></svg>
        <svg class="vi m30t"><use href="#dg"/></svg>
        <svg class="vi m30t"><use href="#clk"/></svg>
        <svg class="vi m19t"><use href="#rb"/></svg>
        <svg class="vi m19t"><use href="#wand"/></svg>
        <svg class="vi m17t"><use href="#tool"/></svg>
      </div>
      <div class="navpanel">
        <div class="navhead">部件导航器</div>
        <div class="navtable">
          <div class="th">名称<b class="sort"></b></div>
          <div class="tr"><b class="bx pl"></b><b class="dash"></b><svg class="ti"><use href="#fgl"/></svg><span>模型视图</span></div>
          <div class="tr alt"><b class="bx pl"></b><b class="dash d2"></b><svg class="ti"><use href="#okc"/></svg><svg class="ti t2"><use href="#cam"/></svg><span>摄像机</span></div>
          <div class="tr"><b class="bx mi last"></b><b class="dash"></b><svg class="ti"><use href="#fldo"/></svg><span>模型历史记录</span></div>
          <div class="tr alt deep"><b class="stub"></b><svg class="ti ck"><use href="#erx"/></svg><svg class="ti ck2"><use href="#okc"/></svg><svg class="ti"><use href="#cs"/></svg><span class="bold">基准坐标系 (0)</span></div>
          <div class="filler"></div>
        </div>
        <div class="navbot">
          <div>相关性</div><div>细节</div><div>预览</div>
        </div>
      </div>
    </aside>
    <div class="view">
      <div class="viewtop"></div>
      <svg class="canvas" viewBox="210 244 1709 739">
        <g fill="none">
          <path d="M1241 613V482M1308 546V613" stroke="#9a9cf0" stroke-width="2"/>
          <path d="M1241 546h67M1241 613h132" stroke="#0000e0" stroke-width="1"/>
          <path d="M1241 480l-3 16h6zM1373 613l-16-3v6z" fill="#0000e0"/>
          <path d="M1233 613h16M1241 605v16M1238 610l6 6M1244 610l-6 6" stroke="#0000e0" stroke-width="1.500"/>
        </g>
        <text x="1241" y="476" class="axl">Y</text>
        <text x="1381" y="617" class="axl">X</text>
      </svg>
    </div>
  </main>

  <section class="btb">
    <b class="grip"></b><svg class="i"><use href="#b1"/></svg><b class="car w12"></b><svg class="i"><use href="#b2"/></svg><svg class="i"><use href="#b3"/></svg><b class="car w14"></b><svg class="i"><use href="#b4"/></svg><svg class="i tight"><use href="#b5"/></svg><svg class="i"><use href="#b6"/></svg><b class="div w10"></b><svg class="i"><use href="#b7"/></svg><svg class="i tight"><use href="#b8"/></svg><b class="div w8"></b><svg class="i"><use href="#b9"/></svg><b class="div w4"></b><b class="sp w6"></b><svg class="i" viewBox="0 0 24 24"><path d="M2 10h6l4-6h10M8 10l4 5h3" fill="none" stroke="#3a6ab0" stroke-width="2"/><path d="M2 8h7v4H2zM11 2h11v4H11zM11 13h5v3h-5z" fill="#c8d4e8" stroke="#445"/><path d="M13 15h10v9H13z" fill="#fff" stroke="#223a88"/><text x="18" y="23" font-size="8" font-weight="700" text-anchor="middle" fill="#223a88" font-family="Liberation Serif">i</text></svg><b class="div w2"></b><svg class="i tight"><use href="#b11"/></svg><b class="car w10"></b><b class="car w12"></b><b class="div w6"></b><b class="grip grip4"></b><svg class="i"><use href="#sk2"/></svg><svg class="i"><use href="#flg"/></svg><span class="fin">完成草图</span><b class="sp w3"></b><svg class="i"><use href="#wv"/></svg><svg class="i"><use href="#ln"/></svg><svg class="i"><use href="#ac"/></svg><svg class="i"><use href="#cir"/></svg><svg class="i"><use href="#fl1"/></svg><svg class="i"><use href="#fl2"/></svg><svg class="i"><use href="#rc2"/></svg><svg class="i"><use href="#stu"/></svg><svg class="i"><use href="#pls"/></svg><svg class="i"><use href="#hg"/></svg><b class="car w16"></b><b class="div w2"></b><svg class="i"><use href="#t1"/></svg><svg class="i"><use href="#t2"/></svg><svg class="i"><use href="#t3"/></svg><b class="div w8"></b><svg class="i"><use href="#t4"/></svg><b class="car w12"></b><b class="div w5"></b><svg class="i"><use href="#t5"/></svg><svg class="i"><use href="#t6"/></svg><b class="sp w3"></b><svg class="i"><use href="#t7"/></svg><b class="car w7"></b><b class="div w9"></b><svg class="i"><use href="#t8"/></svg><svg class="i"><use href="#t9"/></svg><svg class="i"><use href="#t10"/></svg><b class="car w10"></b>
  </section>

  <footer class="status">
    <span>选择 <b>DXF/DWG</b> 文件以导入</span>
    <span class="stat-ics"><svg class="si"><use href="#flg"/></svg><svg class="si si2" viewBox="0 0 16 16"><path d="M1 1h14v14H1z" fill="#fff" stroke="#aaa" stroke-dasharray="3 2"/><path d="M4 4h8v8H4z" fill="#6a94d0" stroke="#334"/></svg></span>
  </footer>

  <section class="task">
    <svg class="orb" viewBox="0 0 40 40"><circle cx="20" cy="20" r="19" fill="url(#go)" stroke="#9fc8e0"/><path d="M10 13c3-2 6-2 9-1l-1.500 7c-3-1-6-1-9 1z" fill="#e85030"/><path d="M21 12c3 1 6 1 9-1l-1.500 7c-3 2-6 2-9 1z" fill="#70c030"/><path d="M8 22c3-2 6-2 9-1l-1.500 7c-3-1-6-1-9 1z" fill="#30a0e8"/><path d="M19 21c3 1 6 1 9-1l-1.500 7c-3 2-6 2-9 1z" fill="#f8c020"/></svg>
    <div class="tbtn plain"><svg class="tic" viewBox="0 0 40 40"><path d="M2 22L18 5l16 14-16 17z" fill="#f8f8e0" stroke="#111" stroke-width="1.500"/><path d="M6 20L18 8l13 11" fill="#c8b050"/><path d="M8 21l9-9 10 9-10 9z" fill="#b8a848" stroke="#777" stroke-dasharray="1 1"/><path d="M2 24l16 14 16-17" fill="none" stroke="#111" stroke-width="2"/><path d="M28 7l-9 15" stroke="#2060e0" stroke-width="2.500"/><text x="33" y="34" font-size="18" font-weight="700" fill="#1ad0f0" text-anchor="middle" font-family="Liberation Sans">$</text></svg></div>
    <div class="tbtn a"><svg class="tic"><use href="#cad"/></svg></div>
    <div class="tbtn"><svg class="tic"><use href="#nx"/></svg></div>
    <div class="tbtn"><svg class="tic"><use href="#expl"/></svg></div>
    <div class="tbtn warm"><svg class="tic"><use href="#eb"/></svg></div>
    <div class="tbtn warm w2b"><svg class="tic"><use href="#pan"/></svg></div>
    <div class="tbtn warm w3b"><svg class="tic" viewBox="0 0 40 40"><rect x="3" y="2" width="34" height="36" rx="6" fill="#3aa8f8"/><text x="20" y="28" font-size="25" fill="#fff" text-anchor="middle" font-family="Liberation Sans">W</text></svg></div>
    <div class="tbtn warm"><svg class="tic"><use href="#nx"/></svg></div>
    <div class="tray">
      <svg class="tr-i" viewBox="0 0 16 16"><path d="M1 1h14v14H1z" fill="#4a8cc0" stroke="#ddd"/><path d="M1 11l14-3v7H1z" fill="#e84818"/><text x="8" y="12" font-size="12" font-weight="700" fill="#fff" text-anchor="middle" font-family="Liberation Sans">S</text></svg>
      <svg class="tr-i wf" viewBox="0 0 20 16"><path d="M1 6c5-6 13-6 18 0M4 9c3-4 9-4 12 0M7 12c2-2 4-2 6 0" fill="none" stroke="#50c010" stroke-width="2"/><circle cx="10" cy="14.500" r="1.500" fill="#50c010"/></svg>
      <b class="up"></b>
      <svg class="tr-i spk" viewBox="0 0 16 16"><path d="M1 5h3l4-4v14l-4-4H1z" fill="#eee"/><path d="M10 5c2 2 2 4 0 6M12 3c3 3 3 7 0 10" fill="none" stroke="#eee"/></svg>
      <svg class="tr-i sig" viewBox="0 0 16 14"><path d="M1 11h2v3H1zM4 9h2v5H4zM7 6h2v8H7zM10 3h2v11h-2zM13 0h2v14h-2z" fill="#fff"/></svg>
      <svg class="tr-i sie" viewBox="0 0 16 16"><circle cx="8" cy="8" r="7" fill="#40c030"/><path d="M4 7c1-3 7-3 8 0zM4 9h8c-1 3-7 3-8 0z" fill="#fff"/></svg>
      <div class="clock"><div>16:18</div><div>2017/11/19</div></div>
      <b class="showdesk"></b>
    </div>
  </section>
</div>

<section class="wizard">
  <div class="wz-title">
    <svg class="wz-gear"><use href="#gearw"/></svg><span>AutoCAD DXF/DWG 导入向导</span>
    <svg class="wz-ctl" viewBox="0 0 34 16"><path d="M7 2a6 6 0 1 0 5 3" fill="none" stroke="#fff" stroke-width="1.800"/><path d="M5 1l5 1-3 4z" fill="#fff"/><path d="M21 2l10 12M31 2L21 14" stroke="#fff" stroke-width="2"/></svg>
  </div>
  <div class="wz-body">
    <div class="panel p1">
      <div class="phead"><span>步骤</span><svg class="chev"><path d="M1 9L6 2l5 7" /></svg></div>
      <div class="p1-cols">
        <div class="steps">
          <div class="st"><svg class="sti"><use href="#key"/></svg><span>加载设置</span></div>
          <div class="st alt on"><svg class="sti"><use href="#fld"/></svg><span>输入和输出</span></div>
          <div class="st"><svg class="sti"><use href="#opt"/></svg><span>选项</span></div>
          <div class="st alt"><svg class="sti"><use href="#lay"/></svg><span>图层</span></div>
          <div class="st"><svg class="sti" viewBox="0 0 24 24"><text x="1" y="10" font-size="10" font-weight="700" fill="#1a30c0" font-family="Liberation Sans">A</text><text x="9" y="20" font-size="17" font-style="italic" font-weight="700" fill="#1a30c0" font-family="Liberation Serif">A</text><path d="M1 22h22" stroke="#1a30c0" stroke-width="1.500"/></svg><span>线型</span></div>
          <div class="st alt"><svg class="sti"><use href="#sln"/></svg><span>线型</span></div>
          <div class="st"><svg class="sti"><use href="#hat"/></svg><span>剖面线</span></div>
          <div class="st alt"><svg class="sti"><use href="#sv2"/></svg><span>保存设置</span></div>
          <div class="filler"></div>
        </div>
        <div class="p1-right">
          <div class="desc"><span>该步骤让您选择 DXF/DWG 文件，以将其导入至当前部件或另存为新的部件文件。</span><svg class="bigfld" viewBox="0 0 46 43"><path d="M6 42l30-3 10-1-12 3z" fill="#bbb"/><path d="M1 8l12-4 5 4 15-3v16L1 42z" fill="url(#gf)" stroke="#c8a840"/><path d="M1 42l9-19 35-5-15 19z" fill="#fbe98c" stroke="#c8a840"/><path d="M14 10C18 1 30-1 37 7l4-2-3 13-11-6 4-2c-4-5-13-4-17 0z" fill="#48b048"/></svg></div>
          <div class="grp">
            <div class="grp-h"><span>输入和输出</span><svg class="chev sm"><path d="M1 9L6 2l5 7" /></svg></div>
            <div class="grp-in">
              <div class="lab">DXF/DWG 文件</div>
              <div class="fileline"><div class="inp">C:\Users\Administrator\Desktop\新块.dwg</div><div class="fbtn"><svg class="fbi"><use href="#fld"/></svg></div></div>
              <div class="impline"><span>导入至部件</span><div class="combo"><span>工作部件</span><b class="car w10"></b></div></div>
            </div>
          </div>
        </div>
      </div>
    </div>
    <div class="panel p2">
      <div class="phead"><span>预览</span><svg class="chev"><path d="M1 9L6 2l5 7" /></svg></div>
      <div class="pv-bar">
        <div class="btn b50">预览</div>
        <span class="zoomlab">缩放：0%</span>
        <b class="handle"></b><b class="track"></b>
        <div class="btn b74">适合窗口</div>
        <span class="mono"><svg class="chk" viewBox="0 0 12 12"><path d="M.5.5h11v11H.500z" fill="#e8eaf4" stroke="#8890b0"/><path d="M3 6l2 3 4-7" fill="none" stroke="#3a4a90" stroke-width="1.400"/></svg>单色显示</span>
      </div>
      <div class="pv-cols">
        <div class="pv-list"><div class="pv-h"></div><div class="filler"></div></div>
        <div class="pv-tabs">
          <div class="tabs"><span class="tab act">模型</span><span class="tab">布局</span></div>
          <div class="tabbody"><div class="sheet"></div></div>
        </div>
      </div>
    </div>
    <div class="wz-foot">
      <div class="btn w">&lt; 上一步</div>
      <div class="btn w">下一步 &gt;</div>
      <div class="btn w pri-b">完成</div>
      <div class="btn w">取消</div>
    </div>
  </div>
</section>

<section class="err">
  <div class="err-t">转换</div>
  <div class="err-m">
    <svg class="err-i" viewBox="0 0 30 32"><ellipse cx="15" cy="16" rx="14.500" ry="15.500" fill="#d0d0d0" stroke="#888"/><ellipse cx="15" cy="16" rx="12" ry="13.500" fill="url(#gr)"/><path d="M9 9l12 14M21 9L9 23" stroke="#f4f4f4" stroke-width="4.500"/></svg>
    <span>转换因 C:\Users\Administrator\Desktop\123\新块.prt 未完成</span>
  </div>
  <div class="err-b"><div class="okb">确定(O)</div></div>
</section>

<div class="wm">
  <svg class="wm-h" viewBox="0 0 72 80"><path d="M36 0l36 20v40L36 80 0 60V20z" fill="#9edafa"/><path d="M36 0L0 20v30C8 30 22 16 52 9z" fill="#c6e9fb"/><path d="M36 0l16 9c12 12 16 24 4 46L72 40V20z" fill="#92d6f9"/><path d="M0 56h72v4L36 80 0 60z" fill="#3a8fbf"/><path d="M36 20l18 10v20L36 60 18 50V30z" fill="#fff"/><path d="M36 25l14 8-14 8-14-8z" fill="#c8e8fa"/><path d="M22 33l14 8v16l-14-8z" fill="#a8dcf8"/><path d="M50 33l-14 8v16l14-8z" fill="#80ccf4"/></svg>
  <span class="wm-t">WWW.3DSJW.COM</span>
</div>
</body>
</html>
```

FILE: styles.css
```css
* { box-sizing: border-box; }
html, body { margin: 0; padding: 0; width: 1919px; height: 1079px; overflow: hidden; }
body { position: relative; font: 12px/16px "Noto Sans CJK SC", "Noto Sans", sans-serif; color: #222; background: #fff; }
.sprite { display: block; width: 0; height: 0; }
b { font-weight: 400; }
.app { display: flex; flex-direction: column; width: 1919px; height: 1079px; }

.title { flex: 0 0 26px; display: flex; align-items: center; background: #fff; }
.nx { width: 42px; padding-left: 4px; font: 700 24px/26px "Liberation Sans", sans-serif; color: #8ea3b3; border-right: 1px solid #ddd; }
.title-text { margin-left: 4px; font-size: 13px; }
.siemens { margin-left: auto; margin-right: 21px; font: 700 12.5px/14px "Liberation Sans", sans-serif; letter-spacing: .9px; color: #009a9a; }
.winbtns { width: 60px; height: 14px; margin-right: 7px; }

.menu { flex: 0 0 27px; display: flex; align-items: center; padding-bottom: 3px; background: #559fba; font-size: 11px; position: relative; }
.mgrip { width: 3px; height: 19px; margin-left: 3px; border-left: 3px dotted #dfe8ec; }
.menu span { white-space: nowrap; }
.m1 { margin-left: 8px; width: 49px; }
.m2 { width: 48px; }
.m3 { width: 51px; }

.ribbon { flex: 0 0 168px; display: flex; justify-content: space-between; background: #fff; border-bottom: 1px solid #8d8f92; }
.rib-left { width: 210px; overflow: hidden; display: flex; flex-direction: column; }
.rib-right { width: 927px; display: flex; flex-direction: column; }
.tb { flex: 0 0 34px; display: flex; align-items: center; white-space: nowrap; border-bottom: 1px solid #e2e2e2; }
.rib-right .tb { flex-basis: 33.500px; }
.rib-right .tb.group { border-right: 1px solid #e2e2e2; }
.g318 { width: 318px; }
.tb3 { border-bottom: 0 !important; }
.group { display: flex; align-items: center; height: 100%; border-bottom: 1px solid #e2e2e2; border-right: 1px solid #e2e2e2; }
.tb3 .group { padding-top: 2px; }
.g301 { width: 301px; margin-left: 1.500px; border-left: 1px solid #e2e2e2; }
.g115 { width: 115px; }
.g209 { width: 209px; }
.i { flex: none; width: 24px; height: 24px; margin: 0 3.500px; }
.i.first { margin-left: 0; }
.i.tight { margin-left: 0; }
.i.tighter { margin-left: -3.500px; }
.dotic { flex: none; width: 12px; height: 24px; }
.grip { flex: none; width: 3px; height: 24px; margin: 0 1px 0 3px; border-left: 3px dotted #bbb; }
.grip2 { margin: 0 3px 0 5px; }
.grip3 { margin: 0 2px 0 3px; }
.grip4 { margin: 0 1px 0 0; }
.qs { flex: none; width: 24px; font-size: 11px; }
.xtxt { margin-left: 5px; font: 700 14px "Liberation Sans", sans-serif; }
.car { flex: none; display: flex; align-items: center; justify-content: center; height: 24px; }
.car::before { content: ""; flex: none; border: 3.500px solid transparent; border-top: 4px solid #222; border-bottom: 0; margin-top: 6px; }
.car.gray::before { border-top-color: #999; margin-top: 0; }
.div { flex: none; height: 30px; background: linear-gradient(#d4d4d4, #d4d4d4) center / 1px 100% no-repeat; }
.sp { flex: none; height: 1px; }
.w2 { width: 2px; } .w3 { width: 3px; } .w4 { width: 4px; } .w5 { width: 5px; } .w6 { width: 6px; } .w7 { width: 7px; }
.w8 { width: 8px; } .w9 { width: 9px; } .w10 { width: 10px; } .w11 { width: 11px; } .w12 { width: 12px; }
.w14 { width: 14px; } .w16 { width: 16px; } .w18 { width: 18px; }

.search { flex: 1; display: flex; align-items: center; gap: 8px; padding-left: 5px; white-space: nowrap; }
.sel { flex: none; width: 132px; height: 20px; border: 1px solid #a8a8a8; display: flex; justify-content: flex-end; align-items: center; padding-right: 5px; }
.filt { flex: none; width: 80px; height: 20px; border: 1px solid #a8a8a8; padding-left: 3px; font-size: 12px; line-height: 18px; color: #b0b0b0; overflow: hidden; }

.main { flex: 0 0 762px; display: flex; min-height: 0; }
.side { flex: 0 0 210px; display: flex; }
.vtabs { flex: 0 0 32px; display: flex; flex-direction: column; align-items: center; background: #dcdcdc; border-right: 1px solid #a8a8a8; }
.vi { flex: none; width: 24px; height: 24px; }
.m1t { margin-top: 1px; } .m24t { margin-top: 24px; } .m19t { margin-top: 19px; } .m7t { margin-top: 7px; } .m30t { margin-top: 30px; } .m17t { margin-top: 17px; }
.vactive { flex: none; width: 31px; height: 46px; margin: 8px 0 0 2px; padding: 11px 0 0 3px; background: #fff; border: 1px solid #a8a8a8; border-right: 0; border-radius: 2px 0 0 2px; }
.vi0 { display: block; width: 24px; height: 24px; }
.navpanel { flex: 1; min-width: 0; display: flex; flex-direction: column; background: #fff; }
.navhead { flex: 0 0 28px; padding-left: 8px; line-height: 28px; }
.navtable { flex: 1; min-height: 0; margin-left: 5px; display: flex; flex-direction: column; border: 1px solid #d8d8d8; border-left-width: 2px; border-bottom: 3px solid #bcbcbc; overflow: hidden; }
.th { flex: 0 0 22px; padding-left: 6px; background: #f6f6f6; border-bottom: 1px solid #dcdcdc; line-height: 21px; display: flex; align-items: center; }
.sort { margin-left: 14px; border: 4.500px solid transparent; border-bottom: 5px solid #222; border-top: 0; }
.tr { flex: 0 0 20px; display: flex; align-items: center; padding-left: 5px; border-bottom: 1px solid #e6e6e6; white-space: nowrap; }
.tr.alt { background: #f9f9f9; }
.tr > span { margin-left: 4px; }
.bx { position: relative; flex: none; width: 9px; height: 9px; border: 1px solid #aaa; background: linear-gradient(#222, #222) center / 5px 1px no-repeat; }
.bx.pl { background: linear-gradient(#222, #222) center / 5px 1px no-repeat, linear-gradient(#222, #222) center / 1px 5px no-repeat; }
.bx::after { content: ""; position: absolute; left: 3px; top: 8px; height: 12px; border-left: 1px dotted #999; }
.bx.last::after { display: none; }
.dash { flex: none; width: 4px; border-top: 1px dotted #999; }
.dash.d2 { width: 3px; }
.ti { flex: none; width: 16px; height: 16px; }
.ti.t2 { margin-left: 0; }
.deep { padding-left: 27px; }
.stub { flex: none; width: 11px; height: 10px; margin-top: -10px; border-left: 1px dotted #999; border-bottom: 1px dotted #999; }
.ck { width: 14px; height: 14px; margin-left: 0; }
.ck2 { width: 12px; height: 12px; margin-left: -13px; }
.deep .ti:nth-of-type(3) { margin-left: 2px; }
.deep > span { margin-left: 3px; }
.bold { font-weight: 700; }
.filler { flex: 1; background: repeating-linear-gradient(#fff 0 19px, #e8e8e8 19px 20px, #f9f9f9 20px 39px, #e8e8e8 39px 40px); }
.navbot { flex: 0 0 78px; padding-left: 13px; font-size: 13px; line-height: 25px; color: #0a6e8f; }
.navbot div:last-child { line-height: 21px; }

.view { flex: 1; display: flex; flex-direction: column; min-width: 0; }
.viewtop { flex: 0 0 23px; background: #fff; border-bottom: 3px solid #559fba; }
.canvas { flex: 1; display: block; width: 100%; min-height: 0; background: linear-gradient(#c4c5c7, #e6e7e8); }
.axl { font: 11px "Liberation Sans", sans-serif; fill: #0000e0; text-anchor: middle; }

.btb { flex: 0 0 36px; width: 1919px; display: flex; align-items: center; background: linear-gradient(90deg, #fbfbfb 1230px, #fff 1230px); border-top: 1px solid #e4e4e4; border-bottom: 2px solid #a8a8a8; white-space: nowrap; }
.fin { flex: none; width: 43px; margin-left: 1.500px; font-size: 10.500px; color: #c4c4c4; }
.status { flex: 0 0 21px; display: flex; justify-content: space-between; align-items: center; padding: 0 0 2px 2px; font-size: 11.500px; background: #fff; }
.status b { font-weight: 700; font-family: "Liberation Sans", sans-serif; }
.stat-ics { display: flex; gap: 4px; margin-right: 54px; }
.si { width: 16px; height: 16px; }

.task { flex: 1; display: flex; align-items: stretch; min-height: 0; border-top: 2px solid #333; background:
  linear-gradient(90deg, #45555e 0, #55636c 200px, #6a6250 360px, #7c5a38 490px, #6a4a38 550px, #8a2c28 565px, #8e3230 700px, #a05060 790px, #26395c 812px, #26395c 840px, #88868c 860px, #8a9496 1000px, #7f8d90 1300px, #879597 1500px, #8a4a50 1520px, #8c4048 1590px, #66767c 1640px, #6a7074 1780px, #6c3440 1800px, #6c3440 1880px, #6a7074 1919px); color: #fff; }
.orb { flex: none; width: 40px; height: 37px; margin-left: 7px; margin-top: 0; }
.tbtn { flex: none; display: flex; justify-content: center; align-items: center; width: 52px; margin-right: 10px; background: linear-gradient(rgba(255,255,255,.38), rgba(255,255,255,.12)); border: 1px solid rgba(255,255,255,.35); box-shadow: inset 0 0 0 1px rgba(0,0,0,.25); border-radius: 2px; }
.tbtn.plain { width: 53px; margin: 0 7px 0 15px; background: none; border-color: transparent; box-shadow: none; }
.tbtn.a { width: 50px; margin-right: 12px; }
.tbtn.warm { background: linear-gradient(rgba(255,255,255,.3), rgba(255,220,170,.14)); }
.tbtn.w2b { width: 57px; margin-right: 5px; }
.tbtn.w3b { width: 58px; margin-right: 4px; }
.tic { width: 34px; height: 34px; }
.tray { flex: 1; display: flex; align-items: center; justify-content: flex-end; position: relative; }
.tr-i { flex: none; width: 16px; height: 16px; }
.wf { width: 20px; margin-left: 19px; margin-top: 4px; }
.up { flex: none; margin-left: 14px; border: 4px solid transparent; border-bottom: 5px solid #fff; border-top: 0; }
.spk { margin-left: 13px; }
.sig { margin-left: 8px; }
.sie { margin-left: 8px; }
.clock { flex: none; width: 76px; margin-left: 4px; margin-right: 1px; font-size: 13px; line-height: 19px; text-align: center; text-shadow: 0 0 2px #333; white-space: nowrap; }
.showdesk { flex: none; width: 13px; align-self: stretch; margin-left: 0; background: rgba(255,255,255,.12); border-left: 1px solid rgba(255,255,255,.4); }

/* floating windows */
.wizard { position: absolute; left: 210px; top: 26px; width: 782px; height: 950px; display: flex; flex-direction: column; background: #eee; box-shadow: 0 0 0 1px #d8d8d8; }
.wz-title { flex: 0 0 31px; display: flex; align-items: center; padding: 8px 0 0 6px; background: #559fba; color: #fff; font-size: 15px; white-space: nowrap; }
.wz-gear { flex: none; width: 15px; height: 15px; margin-right: 8px; }
.wz-ctl { flex: none; width: 34px; height: 16px; margin-left: auto; margin-right: 9px; }
.wz-body { flex: 1; min-height: 0; display: flex; flex-direction: column; gap: 4px; padding: 4px 6px 0; }
.panel { background: #fff; display: flex; flex-direction: column; }
.p1 { flex: 0 0 342px; box-shadow: 0 2px 0 #c8c8c8; }
.p2 { flex: 0 0 517px; box-shadow: 0 2px 0 #c8c8c8; padding-bottom: 9px; }
.phead { flex: 0 0 30px; display: flex; align-items: center; justify-content: space-between; padding: 0 7px 4px; font-size: 14px; color: #0a6e8f; }
.chev { flex: none; width: 12px; height: 11px; fill: none; stroke: #0a6e8f; stroke-width: 1.800; margin-right: -1px; }
.chev.sm { width: 12px; stroke-width: 1.300; margin-right: -3px; }
.p1-cols { flex: 1; min-height: 0; display: flex; padding: 0 9px 8px; gap: 2px; }
.steps { flex: 0 0 175px; display: flex; flex-direction: column; border: 1px solid #d6d6d6; padding: 0 1px; overflow: hidden; }
.st { flex: 0 0 20px; display: flex; align-items: center; border-bottom: 1px solid #e6e6e6; white-space: nowrap; }
.st.alt { background: #f9f9f9; }
.st span { flex: 1; padding-left: 3px; line-height: 19px; align-self: stretch; }
.st.on span { background: #8cc2d2; }
.sti { flex: none; width: 16px; height: 16px; }
.p1-right { flex: 1; min-width: 0; display: flex; flex-direction: column; }
.desc { flex: 0 0 53px; display: flex; justify-content: space-between; align-items: center; padding-right: 1px; white-space: nowrap; }
.desc span { margin-top: -5px; font-size: 12.200px; }
.bigfld { flex: none; width: 46px; height: 43px; }
.grp { flex: 1; min-height: 0; display: flex; flex-direction: column; background: #eee; border: 1px solid #dcdcdc; padding: 0 8px 8px; }
.grp-h { flex: 0 0 29px; display: flex; align-items: center; justify-content: space-between; color: #0a6e8f; padding: 0 0 6px 1px; font-size: 12.500px; }
.grp-in { flex: 1; display: flex; flex-direction: column; border: 1px solid #d8d8d8; padding: 3px 3px 0 1px; }
.lab { flex: 0 0 22px; line-height: 18px; padding-bottom: 4px; font-size: 13px; }
.fileline { flex: 0 0 24px; display: flex; gap: 2px; }
.inp { flex: 1; min-width: 0; height: 23px; border: 1px solid #a8a8a8; background: #fff; padding-left: 4px; line-height: 21px; font-size: 12.500px; white-space: nowrap; margin-left: 3px; }
.fbtn { flex: none; width: 24px; height: 24px; display: flex; justify-content: center; align-items: center; border: 1px solid #bdbdbd; background: #eee; }
.fbi { width: 17px; height: 18px; }
.impline { flex: 0 0 27px; display: flex; align-items: center; justify-content: space-between; margin-top: 1px; }
.combo { flex: none; width: 141px; height: 25px; display: flex; align-items: center; justify-content: space-between; padding: 0 5px; border: 1px solid #a8a8a8; background: #fff; }
.combo .car::before { margin-top: 0; }
.pv-bar { flex: 0 0 31px; display: flex; padding: 0 9px 2px; white-space: nowrap; }
.btn { flex: none; display: flex; align-items: center; justify-content: center; border: 1px solid #b0b0b0; background: #fff; }
.b50 { width: 50px; }
.b74 { width: 74px; margin-left: 9px; }
.zoomlab { flex: none; width: 65px; margin-left: 2px; line-height: 20px; font-size: 12px; }
.handle { flex: none; width: 9px; height: 19px; margin-top: 2px; background: #559fba; border: 1px solid #556; }
.track { flex: none; width: 118px; height: 4px; margin-top: 10px; background: #aaa; }
.mono { margin-left: auto; display: flex; align-items: center; height: 29px; gap: 5px; font-size: 12px; margin-right: 1px; }
.chk { flex: none; width: 12px; height: 12px; }
.pv-cols { flex: 1; min-height: 0; display: flex; padding: 0 9px; gap: 2px; }
.pv-list { flex: 0 0 200px; display: flex; flex-direction: column; border: 1px solid #dcdcdc; padding: 1px; }
.pv-h { flex: 0 0 21px; background: #f0f0f0; border-bottom: 2px solid #d0d0d0; }
.pv-tabs { flex: 1; min-width: 0; display: flex; flex-direction: column; }
.tabs { flex: 0 0 30px; display: flex; align-items: flex-end; position: relative; z-index: 1; }
.tab { flex: none; width: 50px; height: 28px; display: flex; align-items: center; justify-content: center; background: #f0f0f0; border: 1px solid #d8d8d8; border-bottom: 1px solid #ccc; }
.tab.act { width: 56px; height: 31px; margin-bottom: -1px; background: #fff; border-bottom: 0; }
.tabbody { flex: 1; min-height: 0; border: 1px solid #ccc; padding: 4px 6px 0; background: #fff; }
.sheet { height: 301px; background: #fff; border: 2px solid #666; }
.wz-foot { flex: 1; display: flex; justify-content: flex-end; align-items: flex-start; gap: 2px; margin-top: 2px; padding: 5px 15px 0 0; position: relative; }
.wz-foot::before { content: ""; position: absolute; left: 2px; right: 4px; top: 0; border-top: 2px solid #d8d8d8; }
.btn.w { width: 96px; height: 29px; background: #eee; }
.pri-b { background: #72b4ca !important; border-color: #72b4ca; color: #fff; }

.err { position: absolute; left: 750px; top: 464px; width: 421px; height: 113px; display: flex; flex-direction: column; background: #eee; border: 1px solid #a8a8a8; border-top: 0; }
.err-t { flex: 0 0 28px; padding-left: 9px; background: #559fba; color: #fff; line-height: 28px; }
.err-m { flex: 0 0 49px; display: flex; align-items: center; padding-left: 15px; gap: 15px; white-space: nowrap; font-size: 12.500px; }
.err-i { flex: none; width: 30px; height: 32px; }
.err-b { display: flex; justify-content: center; }
.okb { width: 63px; height: 25px; display: flex; align-items: center; justify-content: center; background: #e2e2e2; border: 1px solid #aaa; }

.wm { position: absolute; left: 1637px; top: 984px; width: 282px; height: 80px; pointer-events: none; }
.wm-h { display: block; width: 72px; height: 80px; }
.wm-t { position: absolute; left: 81px; top: 54px; font: 700 16px/18px "Liberation Sans", sans-serif; letter-spacing: 2.800px; color: rgba(255,255,255,.42); white-space: nowrap; }
```
